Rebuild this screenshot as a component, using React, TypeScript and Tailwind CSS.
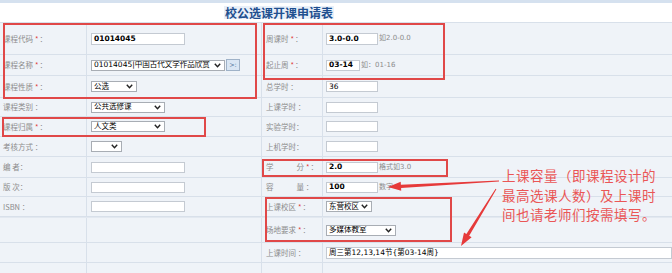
import React from "react";

const Star = () => <span className="text-[#e03b3b] ml-[2px] mr-[1px]">*</span>;

function Label({ children }: { children: React.ReactNode }) {
  return (
    <span className="text-[7.5px] leading-none text-[#8c8c8c] font-['Noto_Sans_CJK_SC',sans-serif] whitespace-nowrap">
      {children}
    </span>
  );
}

function Input({ w, value, bold, h }: { w: string; value?: string; bold?: boolean; h?: string }) {
  return (
    <div
      className={`${w} ${h ?? "h-[11px]"} border border-[#c4cad2] bg-white flex items-center pl-[2px] text-[7.5px] leading-none text-black font-['DejaVu_Sans','Noto_Sans_CJK_SC',sans-serif] whitespace-nowrap overflow-hidden ${bold ? "font-bold" : "font-normal"}`}
    >
      {value}
    </div>
  );
}

function Chevron() {
  return (
    <svg width="7" height="5" viewBox="0 0 7 5" className="shrink-0">
      <path d="M0.8 0.8 L3.5 3.8 L6.2 0.8" fill="none" stroke="#222" strokeWidth="1.4" />
    </svg>
  );
}

function Select({ w, value }: { w: string; value?: string }) {
  return (
    <div
      className={`${w} h-[11px] border border-[#a8adb4] bg-white flex items-center justify-between pl-[2px] pr-[3px] text-[7.5px] leading-none text-black font-['DejaVu_Sans','Noto_Sans_CJK_SC',sans-serif] whitespace-nowrap overflow-hidden`}
    >
      <span>{value}</span>
      <Chevron />
    </div>
  );
}

function Hint({ children }: { children: React.ReactNode }) {
  return (
    <span className="ml-[1px] text-[7px] leading-none text-[#8c8c8c] font-['DejaVu_Sans','Noto_Sans_CJK_SC',sans-serif] whitespace-nowrap">
      {children}
    </span>
  );
}

function Row({
  cls,
  l,
  lc,
  r,
  rc,
}: {
  cls: string;
  l?: React.ReactNode;
  lc?: React.ReactNode;
  r?: React.ReactNode;
  rc?: React.ReactNode;
}) {
  return (
    <div className={`flex border-b border-[#d8e0ea] ${cls}`}>
      <div className="w-[87px] shrink-0 border-r border-[#d8e0ea] flex items-center pl-[3px]">{l}</div>
      <div className="w-[175px] shrink-0 border-r border-[#d8e0ea] flex items-center pl-[4px]">{lc}</div>
      <div className="w-[61px] shrink-0 border-r border-[#d8e0ea] flex items-center pl-[4px]">{r}</div>
      <div className="flex-1 flex items-center pl-[3px] min-w-0">{rc}</div>
    </div>
  );
}

function arrowPoints(x1: number, y1: number, x2: number, y2: number, headLen: number, headW: number, tailW: number, neckW: number) {
  const dx = x2 - x1;
  const dy = y2 - y1;
  const len = Math.hypot(dx, dy);
  const ux = dx / len;
  const uy = dy / len;
  const px = -uy;
  const py = ux;
  const bx = x2 - ux * headLen;
  const by = y2 - uy * headLen;
  const pts = [
    [x1 + px * tailW, y1 + py * tailW],
    [bx + px * neckW, by + py * neckW],
    [bx + px * headW, by + py * headW],
    [x2, y2],
    [bx - px * headW, by - py * headW],
    [bx - px * neckW, by - py * neckW],
    [x1 - px * tailW, y1 - py * tailW],
  ];
  return pts.map((p) => `${p[0].toFixed(1)},${p[1].toFixed(1)}`).join(" ");
}

export default function App() {
  return (
    <div className="relative w-[672px] h-[273px] overflow-hidden bg-[#eff3f8]">
      <div className="h-[3px] bg-[#d5e1ef]" />
      <div className="h-[19px] bg-white flex items-center pl-[224px]">
        <span className="px-[1px] bg-[#e9f0f9] text-[12px] leading-[13px] font-bold text-[#1f4f8f] font-['Noto_Sans_CJK_SC',sans-serif]">
          校公选课开课申请表
        </span>
      </div>
      <div className="border-t border-[#d8e0ea]">
        <Row
          cls="h-[32px]"
          l={<Label>课程代码<Star />：</Label>}
          lc={<Input w="w-[94px]" h="h-[12px]" value="01014045" bold />}
          r={<Label>周课时<Star />：</Label>}
          rc={
            <>
              <Input w="w-[52px]" h="h-[12px]" value="3.0-0.0" bold />
              <Hint>如2.0-0.0</Hint>
            </>
          }
        />
        <Row
          cls="h-[21px]"
          l={<Label>课程名称<Star />：</Label>}
          lc={
            <>
              <Select w="w-[134px]" value="01014045|中国古代文学作品欣赏" />
              <div className="ml-[1px] w-[14px] h-[12px] border border-[#9fb2c8] bg-[#d9e6f4] flex items-center justify-center text-[6.5px] leading-none text-[#4a6d96] font-['DejaVu_Sans',sans-serif]">
                &gt;:
              </div>
            </>
          }
          r={<Label>起止周<Star />：</Label>}
          rc={
            <>
              <Input w="w-[34px]" value="03-14" bold />
              <Hint>如：01-16</Hint>
            </>
          }
        />
        <Row
          cls="h-[22px]"
          l={<Label>课程性质<Star />：</Label>}
          lc={<Select w="w-[46px]" value="公选" />}
          r={<Label>总学时&nbsp;：</Label>}
          rc={<Input w="w-[52px]" value="36" />}
        />
        <Row
          cls="h-[19px]"
          l={<Label>课程类别&nbsp;：</Label>}
          lc={<Select w="w-[74px]" value="公共选修课" />}
          r={<Label>上课学时&nbsp;：</Label>}
          rc={<Input w="w-[52px]" />}
        />
        <Row
          cls="h-[20px]"
          l={<Label>课程归属<Star />：</Label>}
          lc={<Select w="w-[74px]" value="人文类" />}
          r={<Label>实验学时：</Label>}
          rc={<Input w="w-[52px]" />}
        />
        <Row
          cls="h-[20px]"
          l={<Label>考核方式&nbsp;：</Label>}
          lc={<Select w="w-[31px]" />}
          r={<Label>上机学时：</Label>}
          rc={<Input w="w-[52px]" />}
        />
        <Row
          cls="h-[21px]"
          l={<Label>编&nbsp;者：</Label>}
          lc={<Input w="w-[94px]" />}
          r={
            <Label>
              学<span className="inline-block w-[23px]" />分<Star />：
            </Label>
          }
          rc={
            <>
              <Input w="w-[52px]" value="2.0" bold />
              <Hint>格式如3.0</Hint>
            </>
          }
        />
        <Row
          cls="h-[19px]"
          l={<Label>版&nbsp;次：</Label>}
          lc={<Input w="w-[94px]" />}
          r={
            <Label>
              容<span className="inline-block w-[23px]" />量&nbsp;：
            </Label>
          }
          rc={
            <>
              <Input w="w-[52px]" value="100" bold />
              <Hint>数字</Hint>
            </>
          }
        />
        <Row
          cls="h-[20px]"
          l={<Label>ISBN&nbsp;：</Label>}
          lc={<Input w="w-[94px]" />}
          r={<Label>上课校区<Star />：</Label>}
          rc={<Select w="w-[46px]" value="东营校区" />}
        />
        <Row
          cls="h-[26px] border-t border-t-[#e2e8f0]"
          r={<Label>场地要求<Star />：</Label>}
          rc={<Select w="w-[70px]" value="多媒体教室" />}
        />
        <Row
          cls="h-[20px]"
          r={<Label>上课时间&nbsp;：</Label>}
          rc={<Input w="w-[360px]" h="h-[12px]" value="周三第12,13,14节{第03-14周}" />}
        />
        <Row cls="h-[20px]" />
      </div>

      {/* annotation boxes */}
      <div className="absolute left-[3px] top-[23px] w-[254px] h-[76px] border-2 border-[#e04848]" />
      <div className="absolute left-[263px] top-[23px] w-[182px] h-[57px] border-2 border-[#e04848]" />
      <div className="absolute left-[2px] top-[117px] w-[204px] h-[20px] border-2 border-[#e04848]" />
      <div className="absolute left-[262px] top-[159px] w-[186px] h-[18px] border-2 border-[#e04848]" />
      <div className="absolute left-[265px] top-[197px] w-[187px] h-[45px] border-2 border-[#e04848]" />

      {/* annotation text */}
      <div className="absolute left-[502px] top-[166px] text-[13.5px] tracking-[0.5px] leading-[19.6px] text-[#ea5656] font-['Noto_Sans_CJK_SC',sans-serif] whitespace-nowrap">
        <div>上课容量（即课程设计的</div>
        <div>最高选课人数）及上课时</div>
        <div>间也请老师们按需填写。</div>
      </div>

      {/* arrows */}
      <svg className="absolute left-0 top-0 pointer-events-none" width="672" height="273" viewBox="0 0 672 273">
        <polygon points={arrowPoints(499, 181, 388, 187, 13, 4.5, 0.5, 1.6)} fill="#e63a3a" />
        <polygon points={arrowPoints(496, 189, 461, 246, 13, 4.5, 0.5, 1.6)} fill="#e63a3a" />
      </svg>
    </div>
  );
}
